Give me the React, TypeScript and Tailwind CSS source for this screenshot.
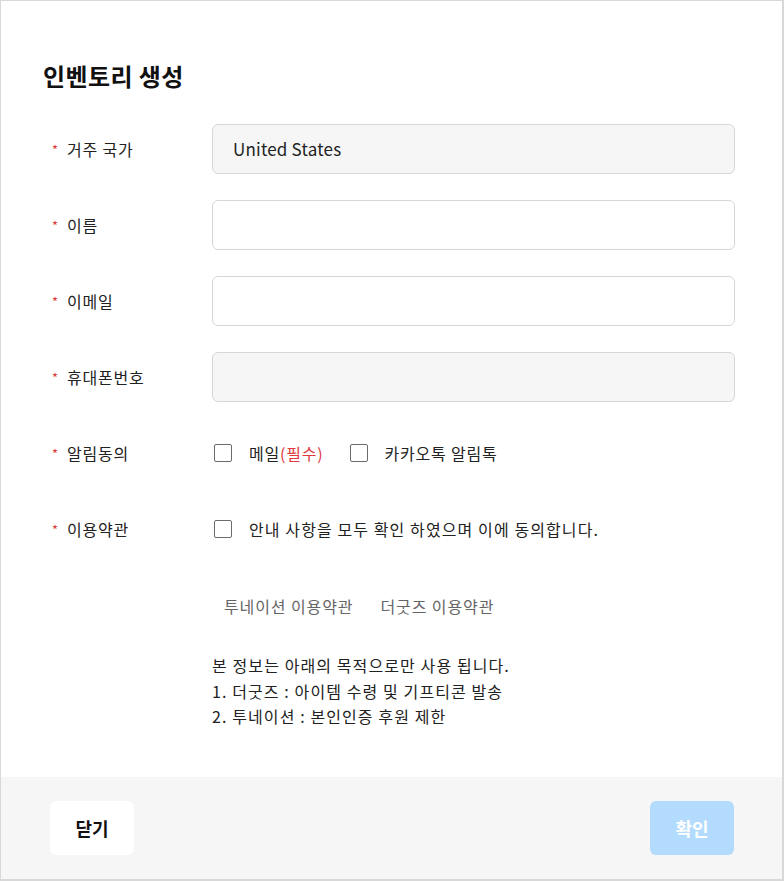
import React from "react";

const font = {
  fontFamily: '"Noto Sans CJK KR", "Noto Sans", sans-serif',
};

const Label = ({ text }: { text: string }) => (
  <div className="flex w-[162px] shrink-0 items-center text-[16px] tracking-[0.8px] text-[#222]">
    <span className="w-[17px] pl-[2px] text-[13px] leading-none text-[#e0393e]">*</span>
    <span>{text}</span>
  </div>
);

const Box = () => (
  <span className="inline-block h-[18px] w-[18px] shrink-0 rounded-[2px] border-[1.5px] border-[#6b6b6b] bg-white" />
);

const Field = ({ value, disabled }: { value?: string; disabled?: boolean }) => (
  <div
    className={`flex h-[50px] w-[523px] items-center rounded-[6px] border border-[#d7d7d7] px-[20px] text-[17px] tracking-[0.2px] text-[#222] ${
      disabled ? "bg-[#f6f6f6]" : "bg-white"
    }`}
  >
    {value}
  </div>
);

const App = () => {
  return (
    <div style={font} className="h-[881px] w-[784px] bg-white">
      <div className="flex h-full w-full flex-col border border-r-2 border-b-2 border-[#d8d8d8]">
        <div className="flex-1 pl-[42px] pt-[58px]">
          <h1 className="text-[24px] font-bold leading-[34px] tracking-[0.4px] text-[#111]">인벤토리 생성</h1>
          <div className="mt-[31px] flex flex-col gap-[26px] pl-[7px]">
            <div className="flex items-center">
              <Label text="거주 국가" />
              <Field value="United States" disabled />
            </div>
            <div className="flex items-center">
              <Label text="이름" />
              <Field />
            </div>
            <div className="flex items-center">
              <Label text="이메일" />
              <Field />
            </div>
            <div className="flex items-center">
              <Label text="휴대폰번호" />
              <Field disabled />
            </div>
            <div className="flex h-[50px] items-center">
              <Label text="알림동의" />
              <div className="flex items-center pl-[2px] text-[16px] tracking-[0.8px] text-[#222]">
                <Box />
                <span className="ml-[17px]">
                  메일<span className="text-[#e0393e]">(필수)</span>
                </span>
                <span className="ml-[26px] flex items-center">
                  <Box />
                  <span className="ml-[17px]">카카오톡 알림톡</span>
                </span>
              </div>
            </div>
            <div className="flex h-[50px] items-center">
              <Label text="이용약관" />
              <div className="flex items-center pl-[2px] text-[16px] tracking-[1.1px] text-[#222]">
                <Box />
                <span className="ml-[17px]">안내 사항을 모두 확인 하였으며 이에 동의합니다.</span>
              </div>
            </div>
          </div>
          <div className="ml-[169px] mt-[40px] flex gap-[27px] pl-[12px] text-[16px] tracking-[0.9px] text-[#666]">
            <span>투네이션 이용약관</span>
            <span>더굿즈 이용약관</span>
          </div>
          <div className="ml-[169px] mt-[35px] text-[16px] leading-[25.5px] tracking-[1.1px] text-[#222]">
            <p>본 정보는 아래의 목적으로만 사용 됩니다.</p>
            <p>1. 더굿즈 : 아이템 수령 및 기프티콘 발송</p>
            <p>2. 투네이션 : 본인인증 후원 제한</p>
          </div>
        </div>
        <div className="flex h-[102px] items-start justify-between bg-[#f6f6f6] pl-[49px] pr-[48px] pt-[24px]">
          <button className="h-[54px] w-[84px] rounded-[6px] bg-white text-[18px] font-bold text-[#111]">
            닫기
          </button>
          <button className="h-[54px] w-[84px] rounded-[6px] bg-[#b3dbfd] text-[18px] font-bold text-white">
            확인
          </button>
        </div>
      </div>
    </div>
  );
};

export default App;
